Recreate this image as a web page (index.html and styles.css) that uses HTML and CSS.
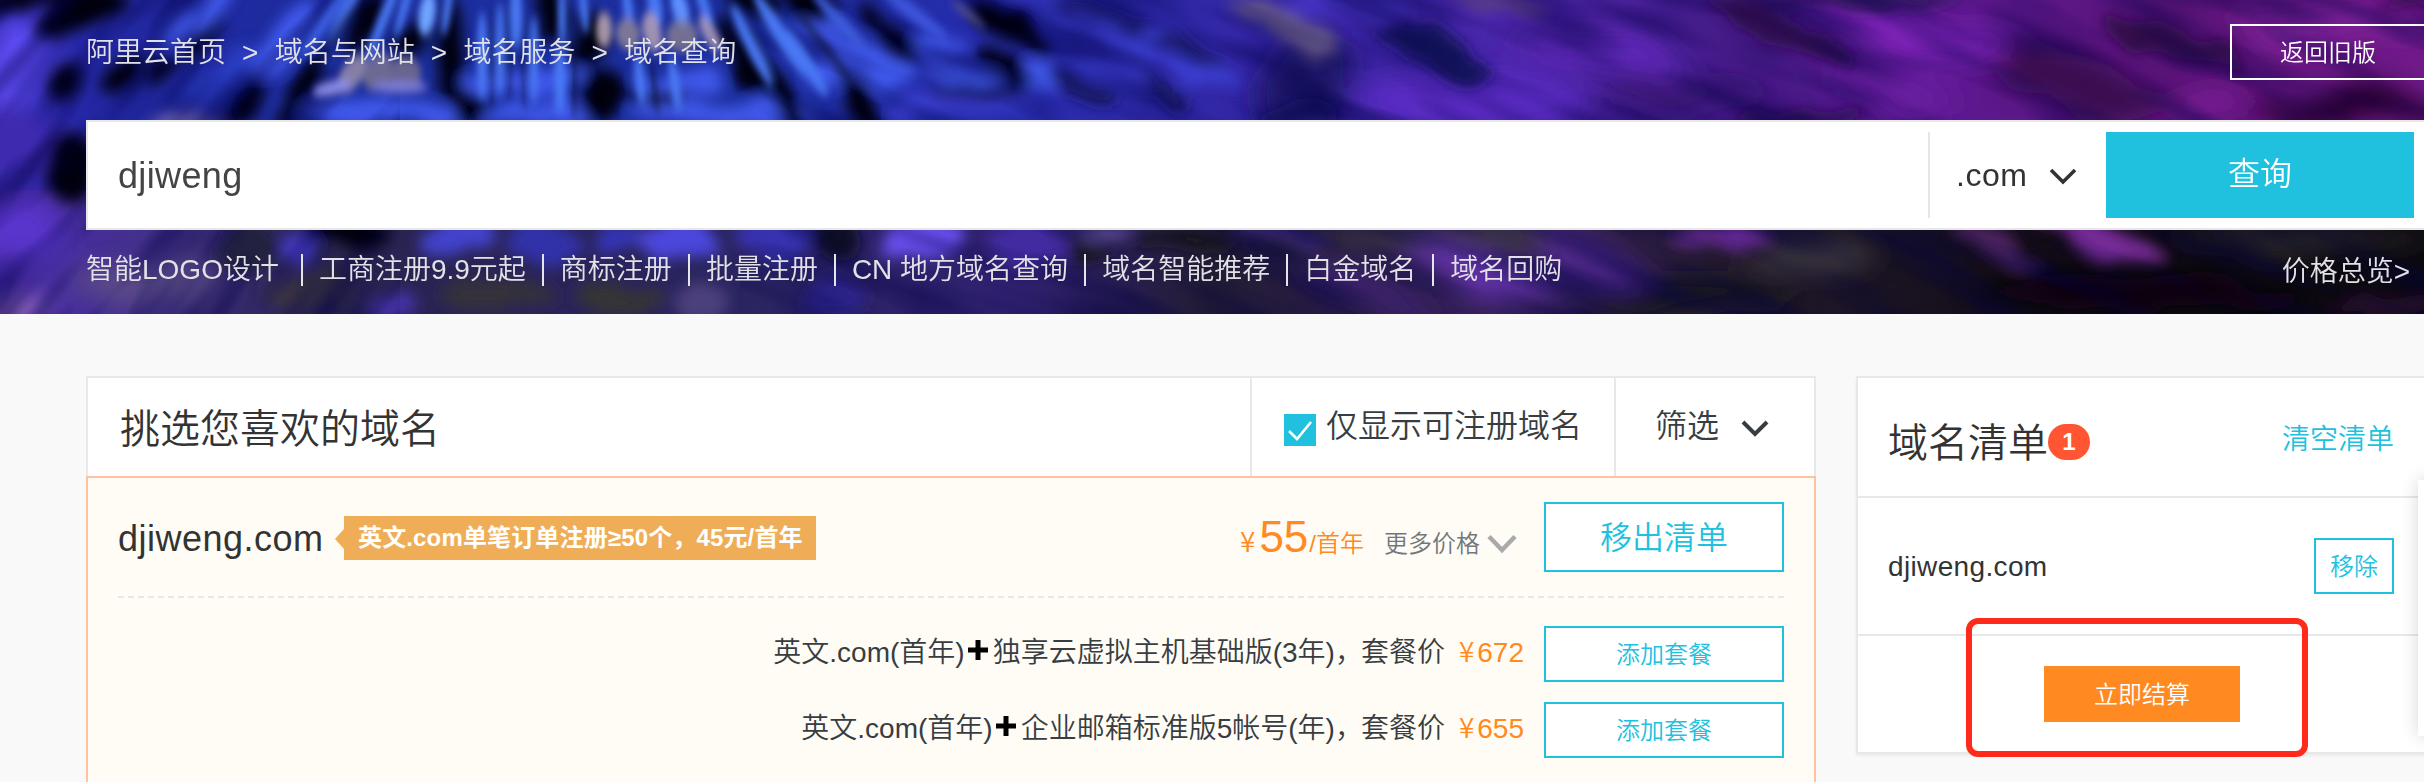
FILE: index.html
```
<!DOCTYPE html>
<html lang="zh-CN">
<head>
<meta charset="utf-8">
<title>域名查询</title>
<link rel="stylesheet" href="styles.css">
</head>
<body>
<header class="hero">
  <svg class="hero-art" viewBox="0 0 2424 314" preserveAspectRatio="none" aria-hidden="true">
    <defs>
      <linearGradient id="top" x1="0" x2="1" y1="0" y2="0">
        <stop offset="0" stop-color="#3a2fc0"/><stop offset=".04" stop-color="#2226a0"/><stop offset=".15" stop-color="#1c2e9e"/>
        <stop offset=".3" stop-color="#1c2f9e"/><stop offset=".42" stop-color="#282cae"/><stop offset=".52" stop-color="#3426a4"/>
        <stop offset=".62" stop-color="#4a26aa"/><stop offset=".72" stop-color="#451a86"/><stop offset=".8" stop-color="#5e1a92"/>
        <stop offset=".9" stop-color="#5a1478"/><stop offset="1" stop-color="#721a8a"/>
      </linearGradient>
      <linearGradient id="low" x1="0" x2="1" y1="0" y2="0">
        <stop offset="0" stop-color="#4a2cae"/><stop offset=".06" stop-color="#43308a"/><stop offset=".13" stop-color="#2a2450"/>
        <stop offset=".3" stop-color="#2a2560"/><stop offset=".42" stop-color="#302070"/><stop offset=".5" stop-color="#221c34"/>
        <stop offset=".62" stop-color="#35205c"/><stop offset=".72" stop-color="#221a2c"/><stop offset=".84" stop-color="#120c18"/><stop offset="1" stop-color="#0c0a10"/>
      </linearGradient>
      <filter id="b3" x="-5%" y="-20%" width="110%" height="140%"><feGaussianBlur stdDeviation="3 5"/></filter>
      <filter id="b6" x="-5%" y="-20%" width="110%" height="140%">
        <feTurbulence type="fractalNoise" baseFrequency=".02" numOctaves="2" seed="4"/>
        <feDisplacementMap in="SourceGraphic" scale="34" xChannelSelector="R" yChannelSelector="G"/>
        <feGaussianBlur stdDeviation="7"/>
      </filter>
      <filter id="b12" x="-5%" y="-20%" width="110%" height="140%">
        <feTurbulence type="fractalNoise" baseFrequency=".012" numOctaves="2" seed="9"/>
        <feDisplacementMap in="SourceGraphic" scale="50" xChannelSelector="R" yChannelSelector="G"/>
        <feGaussianBlur stdDeviation="15 11"/>
      </filter>
      <filter id="grain" x="0" y="0" width="100%" height="100%">
        <feTurbulence type="fractalNoise" baseFrequency=".007 .03" numOctaves="2" seed="12"/>
        <feColorMatrix values="0 0 0 0 0  0 0 0 0 0  0 0 0 0 .06  3 0 0 0 -1.25"/>
      </filter>
      <clipPath id="leftClip"><rect width="400" height="314"/></clipPath>
      <clipPath id="rightClip"><rect x="740" width="1684" height="314"/></clipPath>
    </defs>
    <rect width="2424" height="314" fill="url(#top)"/>
    <rect y="190" width="2424" height="124" fill="url(#low)"/>

    <g filter="url(#b12)">
      <ellipse cx="8" cy="65" rx="38" ry="46" fill="#5d4cf2"/>
      <ellipse cx="20" cy="150" rx="55" ry="45" fill="#3d2cae"/>
      <ellipse cx="22" cy="232" rx="44" ry="24" fill="#5a36cc"/>
      <ellipse cx="0" cy="308" rx="44" ry="20" fill="#8a62b0"/>
      <ellipse cx="150" cy="286" rx="80" ry="24" fill="#5a4886"/>
      <ellipse cx="1305" cy="85" rx="46" ry="50" fill="#1d1366"/>
      <ellipse cx="1470" cy="102" rx="110" ry="32" fill="#5a2cc2"/>
      <ellipse cx="1610" cy="50" rx="80" ry="24" transform="rotate(10 1610 50)" fill="#5c28b4"/>
      <ellipse cx="1690" cy="95" rx="80" ry="18" fill="#3a1874"/>
      <ellipse cx="1910" cy="28" rx="130" ry="22" transform="rotate(14 1910 28)" fill="#7c22b6"/>
      <ellipse cx="1895" cy="92" rx="66" ry="28" transform="rotate(20 1895 92)" fill="#681c9e"/>
      <ellipse cx="2080" cy="84" rx="85" ry="28" transform="rotate(12 2080 84)" fill="#3a0c50"/>
      <ellipse cx="2330" cy="25" rx="90" ry="22" fill="#80209a"/>
      <ellipse cx="2350" cy="106" rx="110" ry="15" fill="#280632"/>
      <ellipse cx="2205" cy="110" rx="42" ry="14" fill="#781a94"/>
      <ellipse cx="1430" cy="240" rx="180" ry="10" fill="#39353e"/>
      <ellipse cx="1480" cy="275" rx="75" ry="20" transform="rotate(20 1480 275)" fill="#6430aa"/>
      <ellipse cx="1590" cy="265" rx="55" ry="26" transform="rotate(20 1590 265)" fill="#4e2888"/>
      <ellipse cx="1370" cy="300" rx="70" ry="16" transform="rotate(25 1370 300)" fill="#3e2470"/>
      <ellipse cx="1690" cy="300" rx="110" ry="16" fill="#18121c"/>
      <ellipse cx="1810" cy="258" rx="60" ry="17" fill="#3c383c"/>
      <ellipse cx="2300" cy="238" rx="130" ry="11" fill="#2b272c"/>
      <ellipse cx="2150" cy="295" rx="160" ry="18" fill="#08060a"/>
    </g>

    <g filter="url(#b6)">
      <g fill="#4058ea">
        <ellipse cx="282" cy="42" rx="50" ry="17" transform="rotate(-50 282 42)"/>
        <ellipse cx="205" cy="12" rx="46" ry="12" transform="rotate(-40 205 12)"/>
        <ellipse cx="225" cy="75" rx="46" ry="11" transform="rotate(-40 225 75)" fill="#2c3cc4"/>
        <ellipse cx="375" cy="112" rx="90" ry="13"/>
        <ellipse cx="525" cy="82" rx="66" ry="12"/>
        <ellipse cx="545" cy="114" rx="60" ry="12"/>
        <ellipse cx="680" cy="80" rx="50" ry="12"/>
        <ellipse cx="725" cy="113" rx="90" ry="12"/>
        <ellipse cx="830" cy="76" rx="26" ry="18"/>
        <ellipse cx="885" cy="78" rx="34" ry="13"/>
        <ellipse cx="850" cy="45" rx="52" ry="14" transform="rotate(20 850 45)"/>
        <ellipse cx="938" cy="45" rx="30" ry="12"/>
        <ellipse cx="980" cy="76" rx="50" ry="9"/>
        <ellipse cx="1040" cy="78" rx="24" ry="12"/>
      </g>
      <g fill="#3a3ccf">
        <ellipse cx="1140" cy="42" rx="60" ry="13" transform="rotate(10 1140 42)"/>
        <ellipse cx="1060" cy="8" rx="60" ry="13" transform="rotate(18 1060 8)"/>
        <ellipse cx="1110" cy="72" rx="36" ry="10" transform="rotate(20 1110 72)"/>
        <ellipse cx="1205" cy="72" rx="42" ry="12" transform="rotate(20 1205 72)"/>
        <ellipse cx="960" cy="106" rx="70" ry="9"/>
        <ellipse cx="1340" cy="6" rx="70" ry="12" fill="#4430c0"/>
      </g>
      <g fill="#02020c">
        <ellipse cx="5" cy="2" rx="65" ry="13" transform="rotate(-12 5 2)"/>
        <ellipse cx="80" cy="10" rx="46" ry="19" transform="rotate(-25 80 10)"/>
        <ellipse cx="66" cy="78" rx="24" ry="11" transform="rotate(-50 66 78)"/>
        <ellipse cx="122" cy="74" rx="24" ry="11" transform="rotate(-50 122 74)"/>
        <ellipse cx="166" cy="70" rx="24" ry="11" transform="rotate(-50 166 70)"/>
        <ellipse cx="205" cy="38" rx="24" ry="8" transform="rotate(-50 205 38)"/>
        <ellipse cx="242" cy="104" rx="32" ry="16" transform="rotate(-30 242 104)"/>
        <ellipse cx="300" cy="92" rx="44" ry="12" transform="rotate(-58 300 92)"/>
        <ellipse cx="72" cy="160" rx="20" ry="36"/>
        <ellipse cx="364" cy="28" rx="32" ry="15" transform="rotate(-60 364 28)"/>
        <ellipse cx="408" cy="36" rx="20" ry="14" transform="rotate(-70 408 36)"/>
        <ellipse cx="452" cy="50" rx="17" ry="52"/>
        <ellipse cx="548" cy="12" rx="18" ry="30"/>
        <ellipse cx="590" cy="44" rx="14" ry="30"/>
        <ellipse cx="470" cy="104" rx="22" ry="15"/>
        <ellipse cx="604" cy="98" rx="19" ry="24"/>
        <ellipse cx="654" cy="97" rx="28" ry="9"/>
        <ellipse cx="744" cy="60" rx="46" ry="13" transform="rotate(62 744 60)"/>
        <ellipse cx="756" cy="4" rx="30" ry="16" transform="rotate(40 756 4)"/>
        <ellipse cx="808" cy="4" rx="32" ry="17" transform="rotate(30 808 4)"/>
        <ellipse cx="780" cy="98" rx="40" ry="11" transform="rotate(55 780 98)"/>
        <ellipse cx="862" cy="104" rx="38" ry="11" transform="rotate(50 862 104)"/>
        <ellipse cx="890" cy="35" rx="46" ry="13" transform="rotate(48 890 35)"/>
        <ellipse cx="1010" cy="27" rx="56" ry="12" transform="rotate(38 1010 27)"/>
        <ellipse cx="1000" cy="64" rx="32" ry="10" transform="rotate(38 1000 64)"/>
      </g>
      <g fill="#15165e">
        <ellipse cx="1100" cy="14" rx="50" ry="8" transform="rotate(20 1100 14)"/>
        <ellipse cx="980" cy="92" rx="46" ry="8"/>
        <ellipse cx="1085" cy="88" rx="36" ry="11" transform="rotate(25 1085 88)"/>
        <ellipse cx="1165" cy="86" rx="34" ry="11" transform="rotate(30 1165 86)"/>
        <ellipse cx="1190" cy="52" rx="40" ry="9" transform="rotate(15 1190 52)"/>
        <ellipse cx="1300" cy="116" rx="40" ry="10"/>
        <ellipse cx="1435" cy="50" rx="66" ry="17" transform="rotate(24 1435 50)"/>
      </g>
      <ellipse cx="1850" cy="0" rx="120" ry="9" fill="#32165e"/>
      <ellipse cx="1780" cy="28" rx="80" ry="15" transform="rotate(24 1780 28)" fill="#2e1050"/>
      <ellipse cx="2170" cy="42" rx="72" ry="15" transform="rotate(18 2170 42)" fill="#330a48"/>
      <ellipse cx="1800" cy="118" rx="70" ry="11" fill="#2e1058"/>
      <ellipse cx="2424" cy="2" rx="60" ry="8" fill="#430a58"/>
      <ellipse cx="1285" cy="28" rx="54" ry="15" transform="rotate(24 1285 28)" fill="#665888"/>
      <ellipse cx="1500" cy="2" rx="46" ry="9" transform="rotate(10 1500 2)" fill="#664a86"/>
      <ellipse cx="185" cy="120" rx="34" ry="8" fill="#8478c0"/>

      <ellipse cx="345" cy="232" rx="38" ry="16" fill="#06060e"/>
      <ellipse cx="250" cy="246" rx="32" ry="18" fill="#242040"/>
      <ellipse cx="302" cy="248" rx="24" ry="20" fill="#4338bc"/>
      <ellipse cx="460" cy="236" rx="32" ry="20" fill="#4242cc"/>
      <ellipse cx="545" cy="240" rx="38" ry="18" fill="#3332a8"/>
      <ellipse cx="615" cy="240" rx="20" ry="18" fill="#3534b4"/>
      <ellipse cx="680" cy="238" rx="46" ry="20" fill="#4c46dc"/>
      <ellipse cx="780" cy="240" rx="38" ry="17" fill="#3832ae"/>
      <ellipse cx="835" cy="245" rx="22" ry="22" fill="#101028"/>
      <ellipse cx="922" cy="238" rx="42" ry="20" fill="#684eea"/>
      <ellipse cx="1025" cy="244" rx="34" ry="22" fill="#422ca0"/>
      <ellipse cx="500" cy="294" rx="60" ry="15" fill="#34323a"/>
      <ellipse cx="620" cy="300" rx="46" ry="17" fill="#353436"/>
      <ellipse cx="835" cy="296" rx="32" ry="20" fill="#2a2288"/>
      <ellipse cx="700" cy="302" rx="28" ry="14" fill="#4c407c"/>
      <ellipse cx="395" cy="304" rx="26" ry="10" fill="#4432a8"/>
      <ellipse cx="310" cy="292" rx="46" ry="13" fill="#3b3440"/>
      <ellipse cx="1090" cy="246" rx="28" ry="18" fill="#16121e"/>
      <ellipse cx="1105" cy="232" rx="36" ry="8" fill="#54448c"/>
      <ellipse cx="1190" cy="240" rx="46" ry="10" fill="#15121c"/>
      <ellipse cx="1280" cy="232" rx="44" ry="8" transform="rotate(12 1280 232)" fill="#442a8c"/>
      <ellipse cx="1720" cy="234" rx="58" ry="11" transform="rotate(8 1720 234)" fill="#6c2a9c"/>
      <ellipse cx="2100" cy="240" rx="70" ry="17" transform="rotate(18 2100 240)" fill="#762a96"/>
      <ellipse cx="2000" cy="246" rx="55" ry="11" transform="rotate(24 2000 246)" fill="#48205e"/>
      <ellipse cx="2390" cy="306" rx="70" ry="8" fill="#26102e"/>
    </g>

    <g clip-path="url(#leftClip)" opacity=".45"><rect x="-200" y="-250" width="800" height="800" transform="rotate(-52 200 157)" filter="url(#grain)"/></g>
    <g clip-path="url(#rightClip)" opacity=".4"><rect x="600" y="-500" width="2000" height="1300" transform="rotate(20 1580 157)" filter="url(#grain)"/></g>

    <g filter="url(#b3)">
      <g fill="#4a78f4">
        <ellipse cx="325" cy="22" rx="5" ry="44" transform="rotate(34 325 22)" fill="#3d62e4"/>
        <ellipse cx="345" cy="12" rx="5" ry="36" transform="rotate(28 345 12)"/>
        <ellipse cx="384" cy="18" rx="5" ry="44" transform="rotate(22 384 18)"/>
        <ellipse cx="404" cy="8" rx="4" ry="32" transform="rotate(16 404 8)"/>
        <ellipse cx="427" cy="14" rx="8" ry="22" transform="rotate(8 427 14)" fill="#6fa4ff"/>
        <ellipse cx="447" cy="10" rx="4" ry="26" transform="rotate(8 447 10)"/>
        <ellipse cx="482" cy="56" rx="5" ry="44"/>
        <ellipse cx="500" cy="50" rx="4" ry="48"/>
        <ellipse cx="516" cy="16" rx="6" ry="32"/>
        <ellipse cx="534" cy="60" rx="4" ry="44"/>
        <ellipse cx="562" cy="16" rx="4" ry="30"/>
        <ellipse cx="560" cy="80" rx="6" ry="34"/>
        <ellipse cx="584" cy="10" rx="4" ry="24" transform="rotate(-6 584 10)"/>
        <ellipse cx="628" cy="8" rx="5" ry="18" transform="rotate(-8 628 8)"/>
        <ellipse cx="655" cy="6" rx="7" ry="20" transform="rotate(-10 655 6)"/>
        <ellipse cx="680" cy="8" rx="8" ry="20" transform="rotate(-14 680 8)" fill="#5f90ff"/>
        <ellipse cx="704" cy="6" rx="5" ry="24" transform="rotate(-18 704 6)"/>
        <ellipse cx="640" cy="80" rx="5" ry="26" transform="rotate(-6 640 80)"/>
        <ellipse cx="675" cy="84" rx="5" ry="28" transform="rotate(-8 675 84)"/>
        <ellipse cx="752" cy="46" rx="6" ry="46" transform="rotate(-26 752 46)"/>
        <ellipse cx="780" cy="34" rx="7" ry="50" transform="rotate(-32 780 34)"/>
        <ellipse cx="806" cy="62" rx="6" ry="40" transform="rotate(-32 806 62)"/>
        <ellipse cx="838" cy="20" rx="6" ry="40" transform="rotate(-42 838 20)" fill="#3c5cdc"/>
        <ellipse cx="912" cy="12" rx="7" ry="44" transform="rotate(-52 912 12)" fill="#3c54dc"/>
      </g>
      <g fill="#000" opacity=".5">
        <ellipse cx="492" cy="60" rx="3" ry="50"/>
        <ellipse cx="508" cy="50" rx="3" ry="50"/>
        <ellipse cx="525" cy="60" rx="3" ry="50"/>
        <ellipse cx="574" cy="80" rx="3" ry="40"/>
        <ellipse cx="654" cy="88" rx="3" ry="28" transform="rotate(-8 654 88)"/>
        <ellipse cx="768" cy="60" rx="3" ry="50" transform="rotate(-30 768 60)"/>
        <ellipse cx="824" cy="46" rx="4" ry="44" transform="rotate(-38 824 46)"/>
        <ellipse cx="336" cy="34" rx="4" ry="44" transform="rotate(34 336 34)"/>
      </g>
      <g fill="#9a8fa8" opacity=".85">
        <ellipse cx="352" cy="74" rx="11" ry="22" transform="rotate(32 352 74)"/>
        <ellipse cx="378" cy="72" rx="14" ry="20" transform="rotate(22 378 72)" fill="#7c7590"/>
        <ellipse cx="405" cy="74" rx="16" ry="18" transform="rotate(10 405 74)" fill="#77708c"/>
        <ellipse cx="332" cy="88" rx="20" ry="7" transform="rotate(-14 332 88)" fill="#a4a2f8"/>
        <ellipse cx="400" cy="87" rx="28" ry="6" fill="#8e8ce0"/>
        <ellipse cx="604" cy="30" rx="8" ry="18" fill="#c0aab8"/>
        <ellipse cx="628" cy="34" rx="12" ry="16" transform="rotate(-8 628 34)" fill="#8e8494"/>
        <ellipse cx="652" cy="32" rx="9" ry="20" transform="rotate(-12 652 32)" fill="#b6a4b6"/>
        <ellipse cx="682" cy="36" rx="16" ry="16" transform="rotate(-20 682 36)" fill="#847c90"/>
        <ellipse cx="710" cy="34" rx="7" ry="20" transform="rotate(-28 710 34)" fill="#b0a0b8"/>
        <ellipse cx="968" cy="14" rx="22" ry="3" transform="rotate(38 968 14)" fill="#6a6080"/>
      </g>
    </g>
  </svg>

  <div class="hero-inner">
    <div class="hero-top">
      <nav class="crumbs">
        <a>阿里云首页</a><span class="crumb-sep">&gt;</span><a>域名与网站</a><span class="crumb-sep">&gt;</span><a>域名服务</a><span class="crumb-sep">&gt;</span><a>域名查询</a>
      </nav>
      <a class="old-version">返回旧版</a>
    </div>

    <div class="search">
      <div class="search-input">djiweng</div>
      <div class="suffix">
        <span>.com</span>
        <svg width="28" height="18" viewBox="0 0 28 18"><path d="M2 2l12 12L26 2" fill="none" stroke="#333" stroke-width="3.600"/></svg>
      </div>
      <div class="search-btn">查询</div>
    </div>

    <div class="hero-links">
      <div class="links">
        <a class="wide">智能LOGO设计</a><a>工商注册9.9元起</a><a>商标注册</a><a>批量注册</a><a>CN 地方域名查询</a><a>域名智能推荐</a><a>白金域名</a><a>域名回购</a>
      </div>
      <a class="price-all">价格总览&gt;</a>
    </div>
  </div>
</header>

<main class="content">
  <section class="results">
    <div class="results-head">
      <h2>挑选您喜欢的域名</h2>
      <div class="only-free">
        <svg class="check" width="32" height="32" viewBox="0 0 32 32"><rect width="32" height="32" fill="#20c1df"/><path d="M5 17l8 8L27 8" fill="none" stroke="#fff" stroke-width="2.600"/></svg>
        <span>仅显示可注册域名</span>
      </div>
      <div class="filter">
        <span>筛选</span>
        <svg width="28" height="18" viewBox="0 0 28 18"><path d="M2 2l12 12L26 2" fill="none" stroke="#373d41" stroke-width="4"/></svg>
      </div>
    </div>

    <div class="result">
      <div class="domain-row">
        <span class="domain">djiweng.com</span>
        <span class="tag">英文.com单笔订单注册≥50个，45元/首年</span>
        <div class="price"><span class="yen">¥</span><b>55</b><span class="per">/首年</span></div>
        <div class="more"><span>更多价格</span><svg width="30" height="20" viewBox="0 0 30 20"><path d="M2 2.500l13 13.500L28 2.500" fill="none" stroke="#aaa" stroke-width="4.500"/></svg></div>
        <div class="btn btn-large">移出清单</div>
      </div>
      <div class="bundle">
        <span class="t">英文.com(首年)</span><svg class="plus" width="22" height="22" viewBox="0 0 22 22"><path d="M8.500 1h5v7.500H21v5h-7.500V21h-5v-7.500H1v-5h7.500z"/></svg><span class="t last">独享云虚拟主机基础版(3年)，</span><span class="set">套餐价</span><span class="amount"><i>¥</i>672</span>
        <div class="btn">添加套餐</div>
      </div>
      <div class="bundle">
        <span class="t">英文.com(首年)</span><svg class="plus" width="22" height="22" viewBox="0 0 22 22"><path d="M8.500 1h5v7.500H21v5h-7.500V21h-5v-7.500H1v-5h7.500z"/></svg><span class="t last">企业邮箱标准版5帐号(年)，</span><span class="set">套餐价</span><span class="amount"><i>¥</i>655</span>
        <div class="btn">添加套餐</div>
      </div>
    </div>
  </section>

  <aside class="cart">
    <div class="cart-head">
      <h2>域名清单</h2><span class="count">1</span>
      <a class="clear">清空清单</a>
    </div>
    <div class="cart-item">
      <span class="cart-name">djiweng.com</span>
      <div class="remove">移除</div>
    </div>
    <div class="cart-foot">
      <div class="checkout">立即结算</div>
      <div class="highlight"></div>
    </div>
  </aside>
</main>
<div class="side-panel"></div>
</body>
</html>
```
FILE: styles.css
```
* { box-sizing: border-box; }
html, body { margin: 0; padding: 0; }
body {
  position: relative;
  width: 2424px;
  height: 782px;
  overflow: hidden;
  background: #f9f9f9;
  color: #333;
  font-family: "Liberation Sans", "Noto Sans CJK SC", sans-serif;
  font-weight: 350;
  font-size: 28px;
  white-space: nowrap;
}
svg { display: block; flex: none; }
h2 { margin: 0; font-weight: 350; font-size: 40px; }

.hero { position: relative; height: 314px; overflow: hidden; color: #e2e2e6; }
.hero-art { position: absolute; left: 0; top: 0; width: 100%; height: 100%; }
.hero-inner { position: relative; width: 2340px; margin-left: 86px; }
.hero-top { display: flex; justify-content: space-between; height: 120px; padding-top: 24px; }
.crumbs { display: flex; height: 56px; line-height: 57px; }
.crumb-sep { padding: 0 16px; margin-right: .4px; }
.old-version {
  width: 196px; height: 56px; border: 2px solid #fff; color: #fff;
  font-size: 24px; line-height: 54px; text-align: center;
}

.search {
  display: flex; align-items: center; height: 110px;
  background: #fff; border: 2px solid #e8e8e8; padding: 10px 10px 10px 30px;
}
.search-input { flex: 1; font-size: 36px; letter-spacing: .35px; color: #444; padding-top: 2px; }
.suffix {
  display: flex; align-items: center; width: 178px; height: 86px;
  border-left: 2px solid #e6e6e6; padding-left: 26px; font-size: 32px; letter-spacing: .5px; color: #333;
}
.suffix svg { margin: 4px 0 0 22px; }
.search-btn {
  width: 308px; height: 86px; background: #20c1df; color: #fff;
  font-size: 32px; line-height: 85px; text-align: center;
}

.hero-links { display: flex; justify-content: space-between; align-items: center; height: 80px; padding-right: 16px; }
.links { display: flex; line-height: 32px; }
.links a { padding-right: 16px; margin-right: 16px; border-right: 2px solid #e6e6ea; }
.links a.wide { padding-right: 22px; }
.links a:last-child { border-right: 0; }
.price-all { margin-top: -2px; }

.content { display: flex; align-items: flex-start; gap: 40px; padding: 62px 0 0 86px; width: 2426px; }
.results { width: 1730px; height: 406px; }
.results-head { display: flex; height: 100px; background: #fff; border: 2px solid #e8e8e8; border-bottom: 0; }
.results-head h2 { flex: 1; padding-left: 32px; line-height: 103px; }
.only-free, .filter { display: flex; align-items: center; border-left: 2px solid #e8e8e8; font-size: 32px; color: #373d41; line-height: 94px; }
.only-free { width: 364px; padding-left: 32px; gap: 10px; }
.only-free .check { margin-top: 6px; }
.only-free span, .filter span { margin-top: -2px; }
.filter { width: 200px; padding-left: 39px; gap: 22px; }
.filter svg { margin-top: 4px; }

.result { height: 320px; background: #fffcf6; border: 2px solid #ffc2a0; padding: 0 30px; }
.domain-row { display: flex; align-items: center; height: 120px; border-bottom: 2px dashed #e6e8ea; margin-bottom: 28px; }
.domain { width: 218px; font-size: 36px; letter-spacing: .5px; margin-top: 4px; }
.tag {
  position: relative; width: 472px; height: 44px; margin: 2px 0 0 8px; padding-left: 14px;
  background: #f0ad57; color: #fff; font-size: 24px; font-weight: 700; letter-spacing: .15px; line-height: 43px;
}
.tag::before {
  content: ""; position: absolute; left: -9px; top: 13px;
  border: 10px solid transparent; border-left: 0; border-right: 9px solid #f0ad57;
}
.price { display: flex; align-items: baseline; margin-left: auto; color: #ff8a22; }
.price .yen { font-family: "Noto Sans CJK SC", sans-serif; font-size: 28px; margin-right: 4px; }
.price b { font-size: 44px; font-weight: 400; }
.price .per { font-size: 24px; margin-left: 1px; }
.more { display: flex; align-items: center; gap: 7px; width: 140px; margin: 10px 20px 0 20px; font-size: 24px; color: #73777a; }
.more span { margin-top: -2px; }
.more svg { margin-top: 4px; }
.btn {
  width: 240px; height: 56px; border: 2px solid #20c1df; background: #fff; color: #20c1df;
  font-size: 24px; line-height: 54px; text-align: center;
}
.btn-large { height: 70px; font-size: 32px; line-height: 69px; }
.bundle { display: flex; justify-content: flex-end; align-items: center; height: 56px; margin-bottom: 20px; color: #373d41; }
.bundle .t, .bundle .set, .bundle .amount { margin-top: -8px; }
.bundle .last { margin-right: -2px; }
.plus { margin: -8px 4px 0 2px; }
.amount { margin-left: 14px; color: #ff8a22; }
.amount i { font-family: "Noto Sans CJK SC", sans-serif; font-style: normal; margin-right: 3px; }
.bundle .btn { margin-left: 20px; }

.cart { width: 570px; height: 378px; background: #fff; border: 2px solid #e8e8e8; box-shadow: 0 2px 3px rgba(0,0,0,.06); }
.cart-head { display: flex; align-items: center; height: 120px; padding: 8px 30px 0; border-bottom: 2px solid #e8e8e8; }
.cart-head h2 { margin-top: -3px; }
.count {
  width: 42px; height: 36px; border-radius: 18px; background: #ff5533; color: #fff;
  font-size: 24px; font-weight: 700; line-height: 36px; text-align: center; margin-top: 2px;
}
.clear { margin-left: auto; color: #20c1df; margin-top: -9px; }
.cart-item { display: flex; align-items: center; justify-content: space-between; height: 138px; padding: 0 30px; border-bottom: 2px solid #e8e8e8; }
.cart-name { letter-spacing: .35px; margin-top: 2px; }
.remove { width: 80px; height: 56px; border: 2px solid #20c1df; color: #20c1df; font-size: 24px; line-height: 54px; text-align: center; }
.cart-foot { position: relative; padding: 30px 0 0 186px; }
.checkout { width: 196px; height: 56px; background: #ff8a22; color: #fff; font-size: 24px; line-height: 57px; text-align: center; }
.highlight { position: absolute; left: 108px; top: -18px; width: 342px; height: 139px; border: 6px solid #ff2a1c; border-radius: 12px; }

.side-panel { position: absolute; left: 2418px; top: 480px; width: 60px; height: 256px; background: #fff; box-shadow: 0 0 16px rgba(0,0,0,.16); }
```
